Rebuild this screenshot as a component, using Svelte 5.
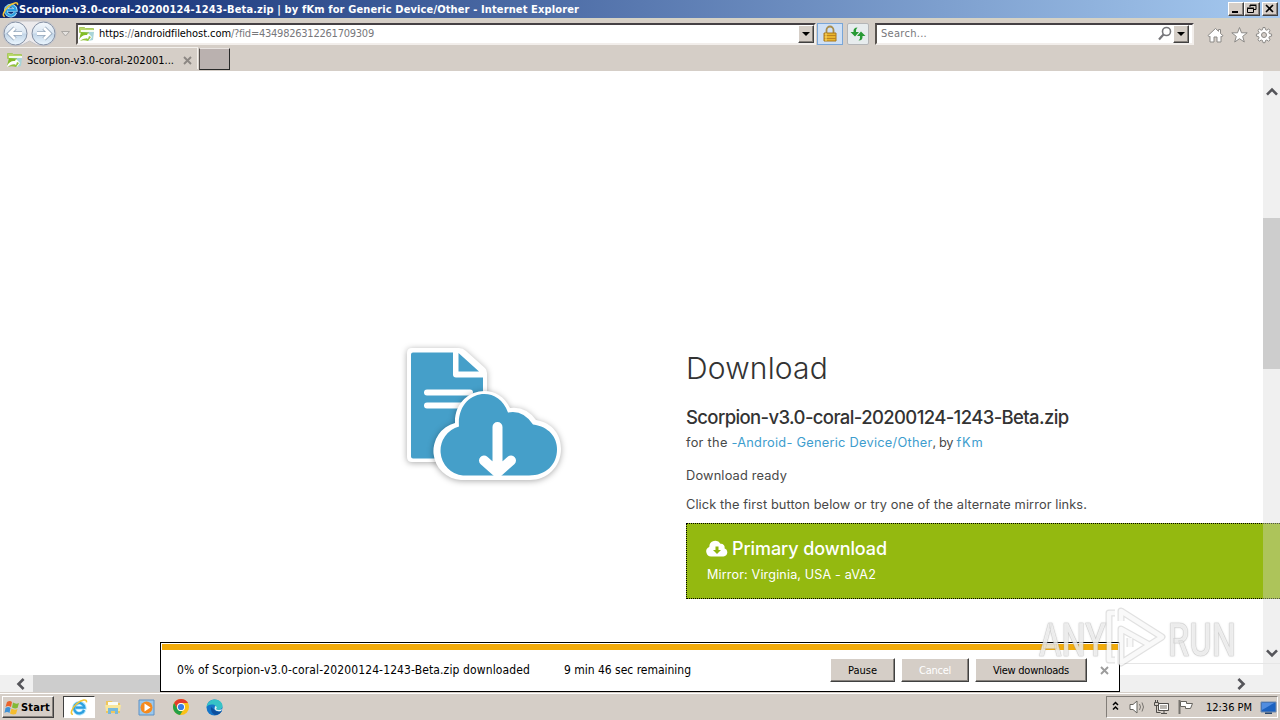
<script>
  // Spreads a label's letters so that it takes exactly the given width.
  function fit(node, width) {
    const natural = node.getBoundingClientRect().width;
    const count = node.textContent.length;
    node.style.letterSpacing = `${(width - natural) / count}px`;
  }
  const file = 'Scorpion-v3.0-coral-20200124-1243-Beta.zip';
</script>

{#snippet ie(size)}
  <svg width={size} height={size} viewBox="0 0 18 18">
    <path d="M14.300 12A5.300 5.300 0 1 1 14.600 9.600H5.600" fill="none" stroke="#a9e2fa" stroke-width="3.800" />
    <path d="M14.100 12A5.200 5.200 0 1 1 14.400 9.700H5.600" fill="none" stroke="#2c9fe0" stroke-width="2.300" />
    <path d="M3 16.300C-.2 16.500 1.500 10.500 6.500 6S17.500 .4 16.400 4.400" fill="none" stroke="#f2c535" stroke-width="1.600" />
  </svg>
{/snippet}

{#snippet favicon()}
  <svg width="16" height="16" viewBox="0 0 16 16">
    <path d="M.5 1.500h5l1 1h8v4H.5z" fill="#b9d86a" stroke="#a8c860" />
    <path d="M2 4h13v3H2z" fill="#f4faf0" />
    <path d="M3 6h12l-1 8-5 1z" fill="#a8d4d8" />
    <path d="M0 14 2 6l8 .5L9 9c-4 0-6 1-9 5z" fill="#83bd25" />
    <path d="M0 15c1-5 5-6 8-6l1-2 4 4-3 4-2-3c-4 0-5 1-8 3z" fill="#fff" />
    <path d="M9 15c-3-1-6-1-8 0 2-2 5-3 8-2l1-3 2 1z" fill="#93c43a" />
  </svg>
{/snippet}

{#snippet arrow(dir)}
  <svg class="arrow" width="12" height="12" viewBox="0 0 12 12" style:rotate={dir}>
    <path d="M1 8.600 6 3.500l5 5.100" fill="none" stroke="#55555a" stroke-width="2.600" />
  </svg>
{/snippet}

<div class="screen">
  <header class="title">
    <span class="logo">{@render ie(17)}</span>
    <b use:fit={560}>{file} | by fKm for Generic Device/Other - Internet Explorer</b>
    <div class="winbtns">
      <i><svg width="14" height="12"><path d="M3 9h6" stroke="#000" stroke-width="2" /></svg></i>
      <i><svg width="14" height="12"><path d="M5 2.500h6v4H9M5 2v2M2.500 5.500h6v4h-6zM5 2h6.500M2 5h7" fill="none" stroke="#000" /></svg></i>
      <i class="close"><svg width="14" height="12"><path d="m3 2 7 7m0-7-7 7" stroke="#000" stroke-width="1.600" /></svg></i>
    </div>
  </header>

  <nav class="toolbar">
    <svg class="navbtns" width="74" height="28" viewBox="0 0 74 28">
      <defs>
        <linearGradient id="disc" x2="0" y2="1"><stop stop-color="#f5f9fd" /><stop offset=".48" stop-color="#d9e5f1" /><stop offset=".52" stop-color="#c2d5e7" /><stop offset="1" stop-color="#ecf7ff" /></linearGradient>
      </defs>
      <path d="M15.500 1h28a12.500 12.500 0 0 1 0 25q-7 0-14-5-7 5-14 5A12.500 12.500 0 0 1 15.500 1z" fill="#eceaec" stroke="#c4c3c6" />
      <circle cx="15.500" cy="13.500" r="11.500" fill="url(#disc)" stroke="#838fa3" />
      <circle cx="43.500" cy="13.500" r="11.500" fill="url(#disc)" stroke="#838fa3" />
      <path d="M22 13.500H10m5-5.500-5.500 5.500L15 19M37 13.500h12M44 8l5.500 5.500L44 19" fill="none" stroke="#96a8bc" stroke-width="4.500" />
      <path d="M22 13.500H10m5-5.500-5.500 5.500L15 19M37 13.500h12M44 8l5.500 5.500L44 19" fill="none" stroke="#fff" stroke-width="2.800" />
      <path d="M61.500 11.500h8l-4 4.500z" fill="#e5e2df" stroke="#aaa7a3" />
    </svg>
    <div class="field address">
      {@render favicon()}
      <span class="url"><span use:fit={132}>https<span class="dim">://</span>androidfilehost.com</span><span class="dim" use:fit={143}>/?fid=4349826312261709309</span></span>
      <i class="drop"></i>
    </div>
    <div class="lock">
      <svg width="16" height="18" viewBox="0 0 16 18">
        <path d="M4.500 8V5a3.500 3.500 0 0 1 7 0v3" fill="none" stroke="#a88d4c" stroke-width="1.800" />
        <path d="M2 8h12v8H2z" fill="#e9b52d" stroke="#a8761b" />
        <path d="M2 10.500h12M2 13.500h12" stroke="#bd8420" /><path d="M4 8v8" stroke="#fadb70" />
      </svg>
    </div>
    <div class="refresh">
      <svg width="16" height="16" viewBox="0 0 16 16">
        <path d="M7.500 1.500Q3 1.500 3.500 6H.5l4.500 4.500L9 6H6q-.5-3 1.500-4.500zM8.500 14.500q4.500 0 4-4.500h3L11 5.500 7 10h3q.5 3-1.500 4.500z" fill="#279a35" />
      </svg>
    </div>
    <div class="field search">
      <span class="dim" use:fit={46}>Search...</span>
      <svg width="16" height="16" viewBox="0 0 16 16"><circle cx="9.500" cy="5.500" r="4" fill="none" stroke="#77777b" stroke-width="1.600" /><path d="M6.500 8.500 2 13.500" stroke="#77777b" stroke-width="2.200" /></svg>
      <i class="drop"></i>
    </div>
    <div class="tools">
      <svg width="17" height="18" viewBox="0 0 17 18"><path d="m1 9.500 7.500-7 3 2.800V3.500h2v4l2.500 2.200-1.200 1.200-.8-.7V16h-4v-5H7v5H3v-5.800l-.8.700z" fill="#fff" stroke="#8b8986" /></svg>
      <svg width="17" height="18" viewBox="0 0 17 18"><path d="m8.500 1.500 2 5.300h5.700l-4.500 3.600 1.600 5.600-4.800-3.300L3.700 16l1.600-5.600L.8 6.800h5.700z" fill="#fff" stroke="#8b8986" /></svg>
      <svg width="18" height="18" viewBox="0 0 18 18">
        <path d="m8 1.500h2l.5 2.200 1.300.5 1.900-1.200 1.400 1.400-1.200 1.900.5 1.300 2.200.5v2l-2.200.5-.5 1.300 1.200 1.900-1.400 1.400-1.900-1.200-1.300.5-.5 2.200H8l-.5-2.200-1.300-.5-1.900 1.200-1.400-1.400 1.200-1.900-.5-1.300-2.200-.5v-2l2.200-.5.5-1.300-1.200-1.900L4.300 3l1.900 1.200 1.300-.5z" fill="#fff" stroke="#8b8986" />
        <circle cx="9" cy="9" r="2.500" fill="#d5cec8" stroke="#8b8986" />
      </svg>
    </div>
  </nav>

  <div class="tabs">
    <div class="tab">
      {@render favicon()}
      <span use:fit={147}>Scorpion-v3.0-coral-202001...</span>
      <svg width="9" height="9"><path d="m1 1 7 7m0-7L1 8" stroke="#8c8783" stroke-width="1.900" /></svg>
    </div>
    <div class="newtab"></div>
  </div>

  <div class="view">
    <div class="viewrow">
      <main>
        <svg class="art" width="180" height="160" viewBox="0 0 180 160">
          <g style="filter: drop-shadow(0 1px 3px #0005)">
            <path d="M17 9h47q4 0 7 3l19 17q2 2 2 5v82q0 7-7 7H17q-5 0-5-5V14q0-5 5-5z" fill="#fff" />
            <path d="M18 13.500h40v22q0 3 3 3h27v77q0 4-4 4H18q-2 0-2-2v-102q0-2 2-2zM63.500 14 84 32.500H63.500z" fill="#459fc9" />
            <path d="M32 53.500h43M32 66.500h35" stroke="#fff" stroke-width="6" stroke-linecap="round" />
          </g>
          <path d="M66 141a29 29 0 0 1-6-57c-1-34 42-44 55-15q16-2 26 12c17 3 25 15 25 29 0 18-14 31-31 31z" fill="#fff" style="filter: drop-shadow(0 1px 3px #0005)" />
          <path d="M68 136.500a25 25 0 0 1-4-49c-3-35 38-45 49-14q15-3 25 12c16 2 24 13 24 25 0 15-11 26-28 26z" fill="#459fc9" />
          <path d="M102.500 88v40M89 121.500l13.500 12 13.500-12" fill="none" stroke="#fff" stroke-width="10" stroke-linecap="round" stroke-linejoin="round" />
        </svg>
        <section>
          <h1><span use:fit={142}>Download</span></h1>
          <h2><span use:fit={382.500}>{file}</span></h2>
          <p class="for"><span use:fit={45.500}>for the&nbsp;</span><a use:fit={201}>-Android- Generic Device/Other</a><span use:fit={24}>, by&nbsp;</span><a use:fit={27}>fKm</a></p>
          <p class="ready"><span use:fit={101}>Download ready</span></p>
          <p class="click"><span use:fit={401}>Click the first button below or try one of the alternate mirror links.</span></p>
          <div class="primary">
            <div class="pt">
              <svg width="22" height="18" viewBox="0 0 22 18"><path d="M5.500 16.500A5 5 0 0 1 3.300 6.900 6 6 0 0 1 14.500 3.800a3.500 3.500 0 0 1 4 4.400 4.300 4.300 0 0 1-1 8.300z" fill="#fff" /><path d="M9.500 6.500h3V10H15l-4 4-4-4h2.500z" fill="#8fb60d" /></svg>
              <span use:fit={155}>Primary download</span>
            </div>
            <span class="mirror" use:fit={170}>Mirror: Virginia, USA - aVA2</span>
          </div>
        </section>
      </main>
      <aside class="vbar">
        {@render arrow('0deg')}
        <div class="vthumb"></div>
        {@render arrow('180deg')}
      </aside>
    </div>
    <div class="hbar">
      {@render arrow('-90deg')}
      <div class="hthumb"></div>
      {@render arrow('90deg')}
    </div>
  </div>

  <footer class="taskbar">
    <div class="start">
      <svg width="17" height="17" viewBox="0 0 17 17">
        <path d="M3 3q3-2 5 0L7 8Q4 6 1.500 8z" fill="#ea632b" /><path d="M9 3.500q3 2 6 .5l-1.500 5Q11 10 8 8.500z" fill="#83b936" />
        <path d="M1.500 9q3-2 5 0l-1 5Q3 12 .5 14z" fill="#3e91d6" /><path d="M7.500 9.500q3 2 6 .5L12 15q-3 1-6-.5z" fill="#f5bd2e" />
      </svg>
      <b use:fit={29}>Start</b>
    </div>
    <div class="active">{@render ie(18)}</div>
    <svg class="task" width="16" height="16" viewBox="0 0 16 16"><path d="M1 2h6l1 2h7v10H1z" fill="#efc75c" /><path d="M3 3h10v3H3z" fill="#fafcf5" /><path d="M0 6h16l-1 6H1z" fill="#f9e69a" /><path d="M3 15V9h10v6h-3v-3H6v3z" fill="#77b9dc" /></svg>
    <svg class="task" width="17" height="17" viewBox="0 0 17 17"><path d="M1 1h15v15H1z" fill="#9ac8ed" stroke="#5e91c4" /><circle cx="8.500" cy="8.500" r="6" fill="#f58a1e" /><path d="m6.500 4.500 6 4-6 4z" fill="#fff" /></svg>
    <svg class="task" width="18" height="18" viewBox="0 0 18 18"><circle cx="9" cy="9" r="8" fill="#fbc116" /><path d="M2.100 5A8 8 0 0 1 16 5H9a4 4 0 0 0-3.500 6z" fill="#e33b2e" /><path d="M2.100 5 5.500 11a4 4 0 0 0 5 2L8 17A8 8 0 0 1 2.100 5z" fill="#23a047" /><circle cx="9" cy="9" r="4" fill="#fff" /><circle cx="9" cy="9" r="3.100" fill="#397de5" /></svg>
    <svg class="task edge" width="17" height="17" viewBox="0 0 17 17"><circle cx="8.500" cy="8.500" r="8" fill="#1575c8" /><path d="M.5 8.500C1 3 5 .5 9 .5c5 0 8 4 7.500 7-.5 3-4 4-6.500 3 1-3-1-5-4-5-3 0-5 1-5.500 3z" fill="#36c3c7" /><path d="M5 8q-1 5 4 8 4 0 7-4-5 2-7.500-1z" fill="#0d4f9d" /><path d="M9 7q3 1 1 3 2 2 6 0l-1 2q-5 1-6.500-2z" fill="#e5f3f1" /></svg>
    <div class="tray">
      <svg class="more" width="9" height="12" viewBox="0 0 9 12"><path d="m2 5 2.500-2.500L7 5M2 9.500 4.500 7 7 9.500" fill="none" stroke="#000" stroke-width="1.500" /></svg>
      <svg width="18" height="16" viewBox="0 0 18 16"><path d="M1 5.500h3L8 2v12l-4-3.500H1z" fill="#fff" stroke="#66645f" /><path d="M10.500 5q2 3 0 6M13 3.500q3 4.500 0 9" fill="none" stroke="#77746f" /></svg>
      <svg width="18" height="16" viewBox="0 0 18 16"><path d="M5.500 4.500h10v7h-10zM8 14.500h6M11 12v2" fill="#b9b5b0" stroke="#504d4a" /><path d="M1.500 3.500h4v3h-4zM2.500 1v3M4.500 1v3M3.500 7v6.500h4" fill="none" stroke="#504d4a" /><path d="M6.500 5.500h8v5h-8z" fill="none" stroke="#fff" /></svg>
      <svg width="18" height="16" viewBox="0 0 18 16"><path d="M2.500 1v14" stroke="#77746f" stroke-width="2" /><path d="M3.500 2.500h6v2h6l-2 5h-5v-2h-5z" fill="#fff" stroke="#66645f" /></svg>
      <span use:fit={46}>12:36 PM</span>
      <svg class="desk" width="17" height="15" viewBox="0 0 17 15"><path d="M1 2h15v10H1z" fill="#1c62c0" stroke="#708aad" /><path d="M2 3h12L2 10z" fill="#518de0" /><path d="M5 12.500h7v1.500H5z" fill="#27466d" /></svg>
    </div>
  </footer>

  <div class="seam"></div>
  <div class="notice">
    <div class="stripe"></div>
    <div class="nbody">
      <span class="msg" use:fit={353}>0% of {file} downloaded</span>
      <span class="left" use:fit={127}>9 min 46 sec remaining</span>
      <div class="btn pause"><span use:fit={29}>Pause</span></div>
      <div class="btn cancel"><span use:fit={32}>Cancel</span></div>
      <div class="btn downloads"><span use:fit={76}>View downloads</span></div>
      <svg width="9" height="9"><path d="m1 1 7 7m0-7L1 8" stroke="#9c9c9c" stroke-width="1.900" /></svg>
    </div>
  </div>

  <div class="mark">
    <span class="word">ANY</span>
    <svg width="64" height="76" viewBox="0 0 64 76">
      <g fill="none" stroke-linejoin="round">
        <path d="M17 22V12l41 26-41 26V30l27 15M11 14H5v47h6M26 48v-9" stroke="#888" stroke-opacity=".25" stroke-width="7" />
        <path d="M17 22V12l41 26-41 26V30l27 15M11 14H5v47h6M26 48v-9" stroke="#fff" stroke-opacity=".8" stroke-width="4.500" />
      </g>
    </svg>
    <span class="word">RUN</span>
  </div>
</div>

<style>
  :global(body) { margin: 0; overflow: hidden; }
  .screen { position: relative; width: 1280px; height: 720px; display: flex; flex-direction: column; overflow: hidden; background: #d5cec7; font: 11px "DejaVu Sans Condensed", "DejaVu Sans", sans-serif; color: #000; }
  .screen * { box-sizing: border-box; }
  span, b { white-space: nowrap; }
  svg { display: block; flex: none; }
  .title { height: 18px; flex: none; display: flex; align-items: center; padding: 0 2px; background: linear-gradient(90deg, #0c2870, #a6caf0); color: #fff; }
  .winbtns { display: flex; margin-left: auto; }
  .winbtns i, .drop, .btn, .start { background: #d5cec7; border: 1px solid; border-color: #fff #404040 #404040 #fff; box-shadow: inset -1px -1px #87827d; }
  .winbtns i { width: 16px; height: 14px; }
  .winbtns .close { margin-left: 2px; }
  .toolbar { height: 29px; flex: none; display: flex; align-items: center; border-top: 2px solid #d5d2c5; }
  .navbtns { margin-right: 2px; }
  .field { height: 22px; display: flex; align-items: center; background: #fff; border: 2px solid; border-color: #454044 #f2eeeb #f2eeeb #58534f; }
  .address { width: 740px; padding-left: 1px; }
  .url { display: flex; margin-left: 4px; }
  .dim { color: #77777b; }
  .drop { width: 16px; height: 18px; margin-left: auto; display: grid; place-items: center; }
  .drop::before { content: ""; border: 4px solid transparent; border-top-color: #000; border-bottom: 0; }
  .lock { width: 26px; height: 22px; margin-left: 1px; display: grid; place-items: center; background: #cfe0f5; border: 1px solid #79a6d8; }
  .refresh { width: 22px; height: 22px; margin-left: 4px; display: grid; place-items: center; background: #e7ecee; border: 1px solid #b4b5b7; border-radius: 2px; }
  .search { width: 319px; margin-left: 6px; padding: 0 3px 0 4px; }
  .search svg { margin-left: auto; }
  .search .drop { margin-left: 0; }
  .tools { display: flex; gap: 7px; margin-left: 13px; padding-top: 2px; }
  .tabs { height: 24px; flex: none; display: flex; border-bottom: 2px solid #d5cec7; }
  .tab { width: 198px; display: flex; align-items: center; padding: 3px 6px 0 7px; border: solid #f4f1ed; border-width: 1px 1px 0 0; }
  .tab span { margin-left: 4px; margin-right: 9px; }
  .newtab { width: 31px; height: 22px; margin-left: 1px; margin-top: 1px; background: #bab1af; border: 1px solid #282828; border-left-color: #55504e; border-top-color: #e8e3e0; }
  .view { height: 621px; flex: none; background: #fff; }
  .viewrow { height: 604px; display: flex; }
  main { width: 1263px; display: flex; }
  .art { margin: 268px 0 0 395px; }
  section { width: 593px; flex: none; margin-left: 111px; padding-top: 276px; color: #333; font-family: Inter, sans-serif; font-size: 12.800px; }
  h1, h2, p { margin: 0; }
  h1 { height: 42px; font-size: 30px; line-height: 42px; font-weight: 300; }
  h2 { margin-top: 14px; height: 28px; line-height: 28px; font-size: 18.500px; font-weight: 500; }
  p { height: 20px; line-height: 20px; display: flex; color: #484848; }
  .for { margin-top: 2px; }
  .ready { margin-top: 13px; }
  .click { margin-top: 9px; }
  .for a { color: #3d9dce; white-space: nowrap; }
  .primary { width: 610px; height: 76px; margin-top: 8px; padding: 12px 19px; background: #94b910; border: 1px dotted #000; color: #fff; }
  .pt { height: 25px; display: flex; align-items: center; font-size: 18px; font-weight: 500; }
  .pt span { margin-left: 4px; }
  .mirror { display: inline-block; padding-left: 1px; line-height: 27px; font-size: 12.600px; }
  .vbar { position: relative; width: 17px; padding: 15px 0 16px; display: flex; flex-direction: column; align-items: center; background: #d8d8d85f; }
  .vthumb { width: 17px; height: 151px; margin: 120px 0 auto; background: #cdcdcd; }
  .hbar { height: 17px; display: flex; align-items: center; padding: 0 33px 0 15px; background: #f0f0f0; }
  .hthumb { width: 1040px; height: 17px; margin: 0 auto 0 6px; background: #cdcdcd; }
  .taskbar { height: 28px; flex: none; display: flex; align-items: center; padding: 1px 2px 0; border-top: 1px solid #d5cec7; box-shadow: inset 0 1px #fff; }
  .start { width: 52px; height: 22px; display: flex; align-items: center; padding-left: 1px; }
  .active { width: 32px; height: 22px; margin-left: 9px; margin-right: 10px; display: grid; place-items: center; background: #fff; border: 1px solid #404040; border-right-color: #fff; border-bottom-color: #fff; }
  .task { margin-right: 17px; }
  .task.edge { margin-left: -1px; }
  .tray { width: 172px; height: 22px; margin-left: auto; display: flex; align-items: center; padding-left: 4px; border: 1px solid; border-color: #827d78 #fff #fff #827d78; }
  .tray .more { margin-top: -3px; }
  .tray svg + svg { margin-left: 6px; }
  .tray .more + svg { margin-left: 9px; }
  .tray span { margin-left: 11px; }
  .tray .desk { margin-left: 8px; }
  .seam { position: absolute; left: 1120px; top: 663px; width: 160px; height: 1px; background: #e6e6e6; }
  .notice { position: absolute; left: 160px; top: 642px; width: 960px; height: 50px; background: #fff; border: 1px solid #000; padding: 1px; }
  .stripe { height: 6px; background: #f2ab0a; }
  .nbody { height: 40px; display: flex; align-items: center; padding-left: 15px; }
  .msg, .left { font-size: 12px; margin-top: -1px; }
  .left { margin-left: 34px; }
  .btn { height: 24px; display: grid; place-items: center; }
  .pause { width: 65px; margin-left: 139px; }
  .cancel { width: 68px; margin-left: 6px; color: #fff; }
  .downloads { width: 112px; margin-left: 6px; margin-right: 13px; }
  .mark { position: absolute; left: 1039px; top: 600px; width: 194px; height: 76px; display: flex; align-items: center; justify-content: space-between; padding-top: 3px; }
  .mark svg { margin-top: -6px; }
  .word { width: 65px; font: 500 46px/60px "Liberation Sans Narrow", Roboto, sans-serif; color: #ffffffb0; -webkit-text-stroke: 0.6px #99999955; text-shadow: 0 0 2px #8888; transform-origin: 0 50%; transform: scaleX(.74); }
  .mark .word:last-child { transform-origin: 0 50%; }
</style>
